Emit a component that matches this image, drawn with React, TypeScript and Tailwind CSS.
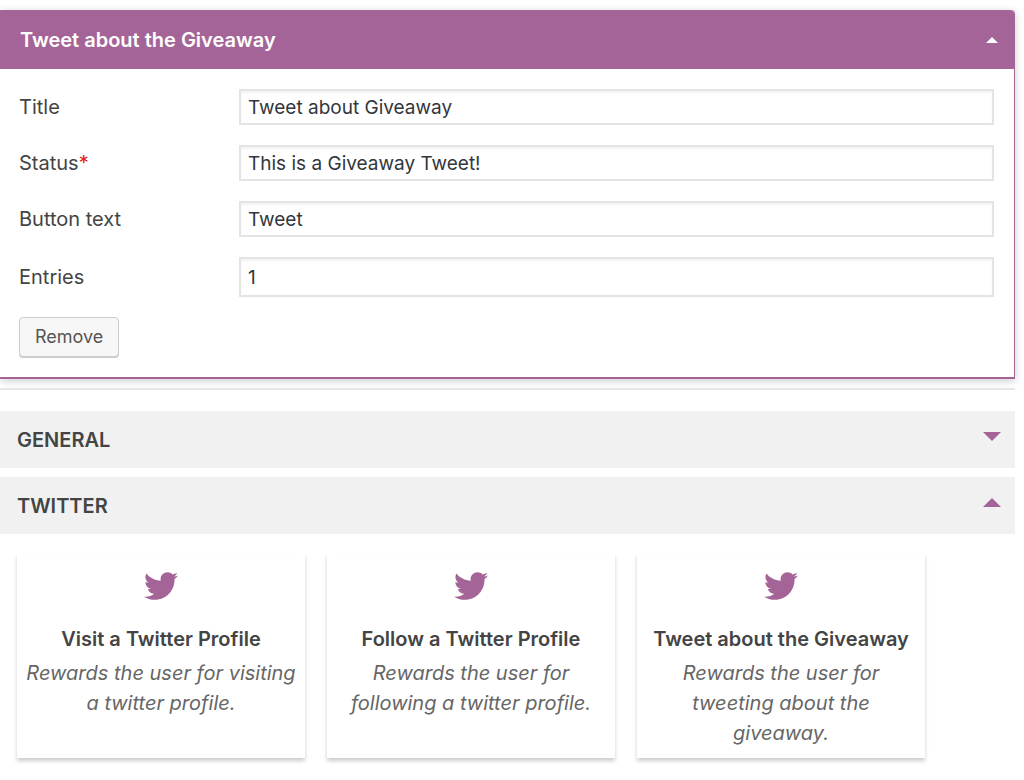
import { useState } from "react";
import { FaTwitter } from "react-icons/fa";

const inputClass =
  "w-full min-w-0 flex-1 border-2 border-[#e4e4e4] bg-white px-[7px] text-[19px] leading-6 text-[#32373c] shadow-[inset_0_2px_3px_rgba(0,0,0,0.05)] outline-none focus:border-[#a46497]";

const fields = [
  { id: "title", label: "Title", value: "Tweet about Giveaway" },
  { id: "status", label: "Status", value: "This is a Giveaway Tweet!", required: true },
  { id: "button-text", label: "Button text", value: "Tweet" },
];

const actions = [
  { title: "Visit a Twitter Profile", text: "Rewards the user for visiting a twitter profile." },
  { title: "Follow a Twitter Profile", text: "Rewards the user for following a twitter profile." },
  { title: "Tweet about the Giveaway", text: "Rewards the user for tweeting about the giveaway." },
];

function Arrow({ up, className }: { up: boolean; className: string }) {
  return (
    <svg viewBox="0 0 18 9" className={className} fill="currentColor" aria-hidden="true">
      <path d={up ? "M0 9 9 0l9 9z" : "M0 0h18L9 9z"} />
    </svg>
  );
}

function SectionHeader({ title, open, onToggle }: { title: string; open: boolean; onToggle: () => void }) {
  return (
    <h3>
      <button
        type="button"
        aria-expanded={open}
        onClick={onToggle}
        className="flex h-[57px] w-full items-center justify-between bg-[#f1f1f1] pr-3.5 pl-[17px] text-left font-semibold"
      >
        {title}
        <Arrow up={open} className="mb-1.5 h-[9px] w-[18px] text-[#a46497]" />
      </button>
    </h3>
  );
}

export default function App() {
  const [panelOpen, setPanelOpen] = useState(true);
  const [generalOpen, setGeneralOpen] = useState(false);
  const [twitterOpen, setTwitterOpen] = useState(true);

  return (
    <main className="overflow-x-hidden bg-white pt-2.5 pr-[9px] pb-5 font-[Inter,sans-serif] text-[20px] leading-6 text-[#444]">
      <section className="rounded-tr border-r border-b-2 border-[#a46497] shadow-[0_2px_8px_rgba(0,0,0,0.2)]">
        <h2>
          <button
            type="button"
            aria-expanded={panelOpen}
            onClick={() => setPanelOpen(!panelOpen)}
            className="flex h-[59px] w-full items-center justify-between rounded-tr bg-[#a46497] pr-4 pl-5 text-left font-semibold text-white"
          >
            Tweet about the Giveaway
            <Arrow up={panelOpen} className="h-[6px] w-3" />
          </button>
        </h2>
        {panelOpen && (
          <form className="flex flex-col gap-5 py-5 pr-5 pl-[19px]" onSubmit={(e) => e.preventDefault()}>
            {fields.map((f) => (
              <div key={f.id} className="flex items-center">
                <label htmlFor={f.id} className="w-[220px] shrink-0">
                  {f.label}
                  {f.required && <span className="text-[#e02020]">*</span>}
                </label>
                <input id={f.id} type="text" defaultValue={f.value} required={f.required} className={`${inputClass} h-9`} />
              </div>
            ))}
            <div className="flex items-center">
              <label htmlFor="entries" className="w-[220px] shrink-0">
                Entries
              </label>
              <input id="entries" type="number" defaultValue="1" className={`${inputClass} h-10`} />
            </div>
            <button
              type="button"
              className="h-10 self-start rounded border border-[#ccc] bg-[#f7f7f7] px-[15px] text-[18px] text-[#555] shadow-[0_1px_0_#ccc]"
            >
              Remove
            </button>
          </form>
        )}
      </section>

      <hr className="mt-[9px] mb-[21px] border-t-2 border-[#e6e6e6]" />

      <div className="flex flex-col gap-[9px]">
        <SectionHeader title="GENERAL" open={generalOpen} onToggle={() => setGeneralOpen(!generalOpen)} />
        <SectionHeader title="TWITTER" open={twitterOpen} onToggle={() => setTwitterOpen(!twitterOpen)} />
      </div>

      {twitterOpen && (
        <div className="flex flex-wrap gap-[22px] pt-5 pl-[17px]">
          {actions.map((a) => (
            <a
              key={a.title}
              href="#add"
              className="flex w-72 flex-col items-center px-2 pt-[15px] pb-2.5 text-center shadow-[0_3px_4px_rgba(0,0,0,0.2)]"
            >
              <FaTwitter className="size-[34px] text-[#a46497]" aria-hidden="true" />
              <h4 className="mt-[21px] leading-[30px] font-semibold">{a.title}</h4>
              <p className="mt-1 leading-[30px] text-[#666] italic">{a.text}</p>
            </a>
          ))}
        </div>
      )}
    </main>
  );
}
